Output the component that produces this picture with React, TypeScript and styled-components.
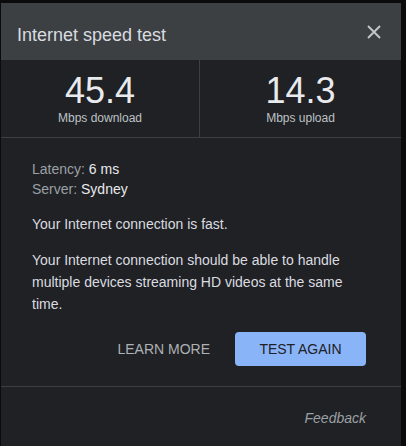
import React from "react";
import styled, { createGlobalStyle } from "styled-components";

const Global = createGlobalStyle`
  html, body { margin: 0; padding: 0; background: #0b0b0c; }
  body { font-family: "Liberation Sans", Arial, sans-serif; }
  * { box-sizing: border-box; }
`;

const Page = styled.div`
  padding: 3px 5px 0 1px;
  height: 446px;
  overflow: hidden;
`;

const Panel = styled.div`
  width: 400px;
  height: 443px;
  background: #202124;
  display: flex;
  flex-direction: column;
`;

const Header = styled.div`
  height: 57px;
  background: #3c4043;
  display: flex;
  align-items: flex-start;
  justify-content: space-between;
  padding: 20px 19px 0 16px;
`;

const Title = styled.h1`
  margin: 0;
  font-size: 18px;
  line-height: 24px;
  font-weight: 400;
  color: #dadce0;
`;

const CloseButton = styled.button`
  background: none;
  border: 0;
  padding: 0;
  margin-top: 1px;
  width: 16px;
  height: 16px;
  display: flex;
  align-items: center;
  justify-content: center;
  cursor: pointer;
`;

const Stats = styled.div`
  display: grid;
  grid-template-columns: 199px 1fr;
  border-bottom: 1px solid #3c4043;
`;

const Stat = styled.div<{ $divider?: boolean }>`
  display: flex;
  flex-direction: column;
  align-items: center;
  padding: 12px 0 11px;
  border-right: ${(p) => (p.$divider ? "1px solid #3c4043" : "0")};
`;

const Value = styled.div`
  font-size: 36px;
  line-height: 38px;
  color: #e8eaed;
`;

const Unit = styled.div`
  font-size: 12px;
  line-height: 16px;
  color: #bdc1c6;
`;

const Body = styled.div`
  padding: 21px 35px 0 31px;
  display: flex;
  flex-direction: column;
`;

const InfoLine = styled.div`
  font-size: 14px;
  line-height: 20px;
  color: #e8eaed;
`;

const Label = styled.span`
  color: #9aa0a6;
`;

const Para = styled.p`
  margin: 14px 0 0;
  font-size: 14px;
  line-height: 22px;
  color: #dadce0;
`;

const Actions = styled.div`
  display: flex;
  justify-content: flex-end;
  align-items: center;
  gap: 25px;
  margin-top: 17px;
`;

const TextButton = styled.button`
  background: none;
  border: 0;
  padding: 0;
  font-family: inherit;
  font-size: 14px;
  line-height: 34px;
  color: #aeb1b5;
  text-transform: uppercase;
  cursor: pointer;
`;

const PrimaryButton = styled.button`
  width: 131px;
  height: 34px;
  background: #8ab4f8;
  border: 0;
  border-radius: 4px;
  font-family: inherit;
  font-size: 14px;
  color: #202124;
  text-transform: uppercase;
  cursor: pointer;
`;

const Footer = styled.div`
  margin-top: 20px;
  border-top: 1px solid #3c4043;
  padding: 20px 35px 0 0;
  display: flex;
  justify-content: flex-end;
`;

const FeedbackLink = styled.a`
  font-size: 14px;
  line-height: 22px;
  font-style: italic;
  color: #9aa0a6;
  text-decoration: none;
`;

export default function App() {
  return (
    <>
      <Global />
      <Page>
        <Panel>
          <Header>
            <Title>Internet speed test</Title>
            <CloseButton aria-label="Close">
              <svg width="14" height="14" viewBox="0 0 14 14">
                <path d="M1 1L13 13M13 1L1 13" stroke="#c4c7c9" strokeWidth="1.9" />
              </svg>
            </CloseButton>
          </Header>
          <Stats>
            <Stat $divider>
              <Value>45.4</Value>
              <Unit>Mbps download</Unit>
            </Stat>
            <Stat>
              <Value>14.3</Value>
              <Unit>Mbps upload</Unit>
            </Stat>
          </Stats>
          <Body>
            <InfoLine>
              <Label>Latency:</Label> 6 ms
            </InfoLine>
            <InfoLine>
              <Label>Server:</Label> Sydney
            </InfoLine>
            <Para>Your Internet connection is fast.</Para>
            <Para>
              Your Internet connection should be able to handle multiple devices streaming HD videos at the same time.
            </Para>
            <Actions>
              <TextButton>Learn more</TextButton>
              <PrimaryButton>Test again</PrimaryButton>
            </Actions>
          </Body>
          <Footer>
            <FeedbackLink href="#">Feedback</FeedbackLink>
          </Footer>
        </Panel>
      </Page>
    </>
  );
}
